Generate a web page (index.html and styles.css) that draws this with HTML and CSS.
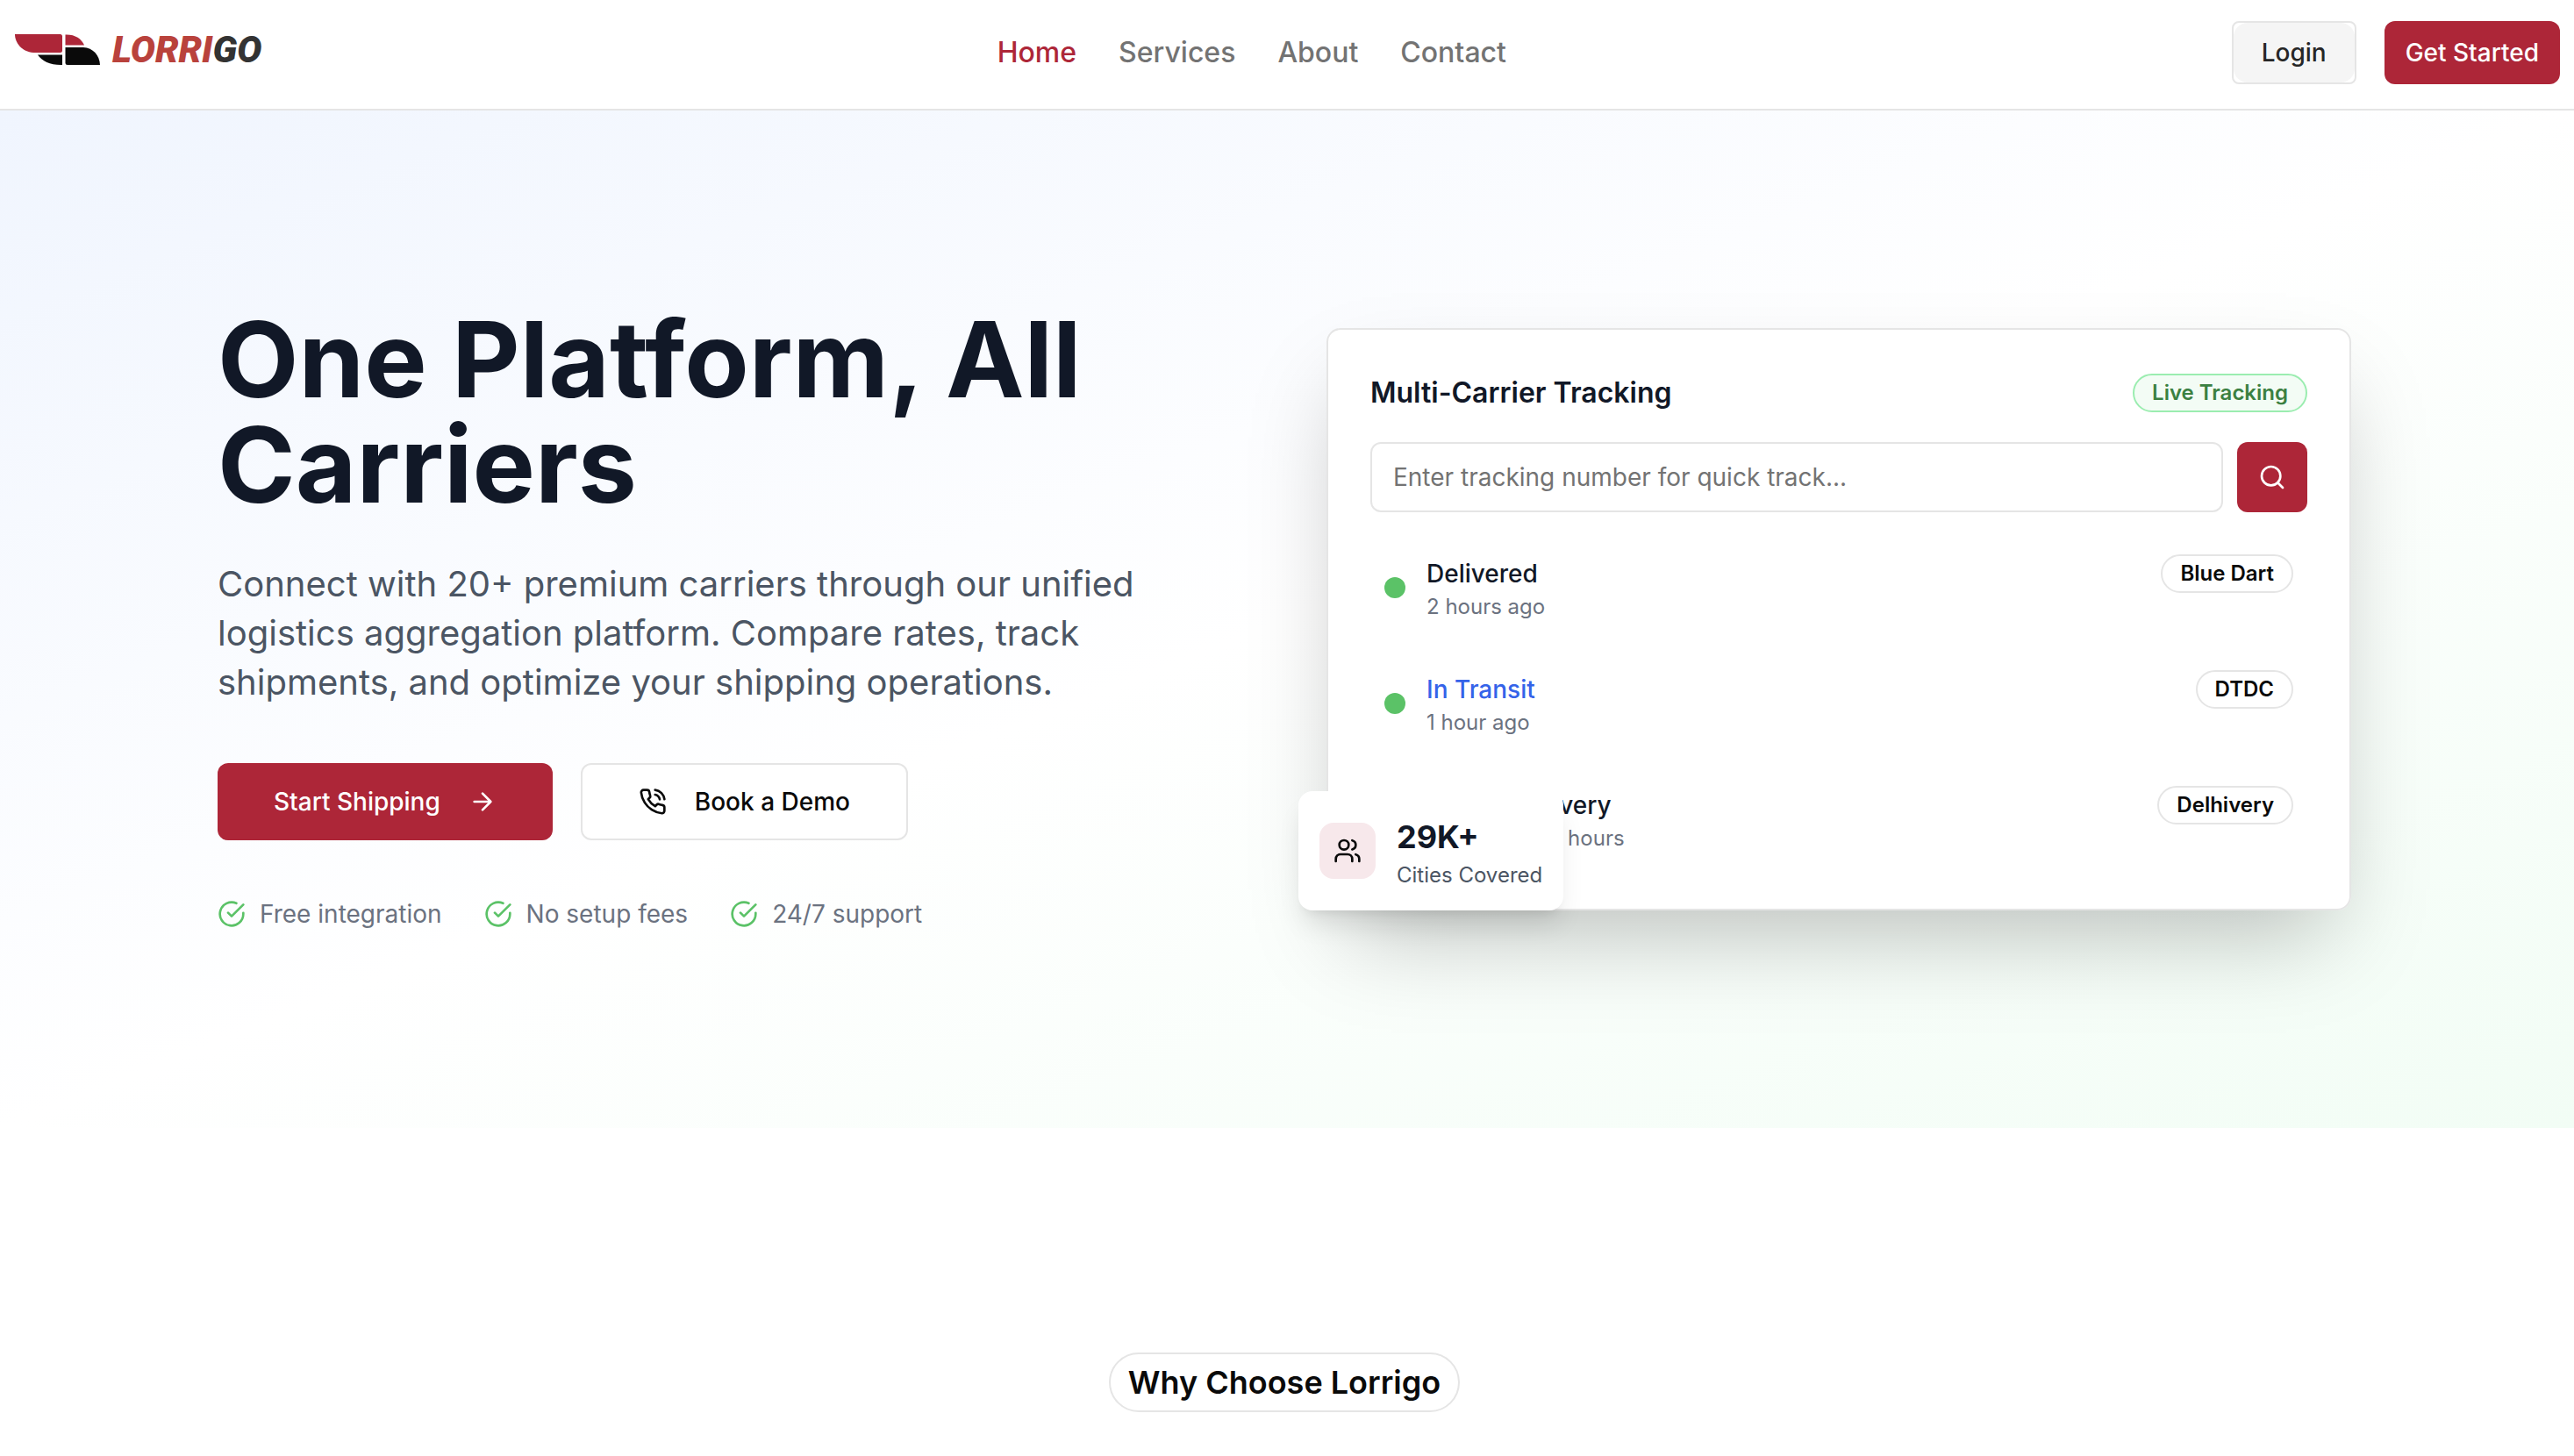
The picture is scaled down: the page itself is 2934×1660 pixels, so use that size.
FILE: index.html
```html
<!DOCTYPE html>
<html lang="en">
<head>
<meta charset="utf-8">
<meta name="viewport" content="width=device-width, initial-scale=1">
<title>Lorrigo</title>
<link rel="stylesheet" href="styles.css">
</head>
<body>
<header class="site-header">
  <a class="logo" href="#">
    <svg class="logo-mark" viewBox="-1 0 98 36" aria-hidden="true">
      <path fill="#ad2638" d="M0 0H51.500Q54 0 54 2.500V18.500Q54 21 51.500 21H21C8 20 0 10 0 0Z"/>
      <path fill="#ad2638" d="M57.500 0.500C68 0 76 5 79 12.500H57.500Z"/>
      <path fill="#0a0a0a" d="M26 23.500H54V35C41 35.500 31 31 26 23.500Z"/>
      <path fill="#0a0a0a" d="M57.500 15H78C89 15.500 96.500 24 97 35H60Q57.500 35 57.500 32.500Z"/>
    </svg>
    <span class="logo-text">LORRI<span class="logo-dark">GO</span></span>
  </a>
  <nav class="nav" aria-label="Main">
    <a class="nav-link nav-link-active" href="#">Home</a>
    <a class="nav-link" href="#">Services</a>
    <a class="nav-link" href="#">About</a>
    <a class="nav-link" href="#">Contact</a>
  </nav>
  <div class="account">
    <div class="login-frame"><button class="login" type="button">Login</button></div>
    <button class="btn btn-primary btn-compact" type="button">Get Started</button>
  </div>
</header>
<main>
  <section class="hero">
    <div class="hero-grid">
      <div class="pitch">
        <h1 class="title">One Platform, All Carriers</h1>
        <p class="lead">Connect with 20+ premium carriers through our unified logistics aggregation platform. Compare rates, track shipments, and optimize your shipping operations.</p>
        <div class="actions">
          <button class="btn btn-primary btn-large" type="button">Start Shipping
            <svg class="icon" viewBox="0 0 24 24" aria-hidden="true"><path d="M5 12h14M12 5l7 7-7 7"/></svg>
          </button>
          <button class="btn btn-outline btn-large" type="button">
            <svg class="icon" viewBox="0 0 24 24" aria-hidden="true"><path d="M22 16.920v3a2 2 0 0 1-2.180 2 19.790 19.790 0 0 1-8.630-3.070 19.500 19.500 0 0 1-6-6 19.790 19.790 0 0 1-3.070-8.670A2 2 0 0 1 4.110 2h3a2 2 0 0 1 2 1.720 12.840 12.840 0 0 0 .7 2.810 2 2 0 0 1-.45 2.110L8.090 9.910a16 16 0 0 0 6 6l1.270-1.270a2 2 0 0 1 2.110-.45 12.840 12.840 0 0 0 2.810.7A2 2 0 0 1 22 16.920z"/><path d="M14.050 2a9 9 0 0 1 8 7.940M14.050 6A5 5 0 0 1 18 10"/></svg>
            Book a Demo</button>
        </div>
        <ul class="perks">
          <li class="perk"><svg class="icon icon-green" viewBox="0 0 24 24" aria-hidden="true"><path d="M22 11.080V12a10 10 0 1 1-5.930-9.140M22 4 12 14.010l-3-3"/></svg>Free integration</li>
          <li class="perk"><svg class="icon icon-green" viewBox="0 0 24 24" aria-hidden="true"><path d="M22 11.080V12a10 10 0 1 1-5.930-9.140M22 4 12 14.010l-3-3"/></svg>No setup fees</li>
          <li class="perk"><svg class="icon icon-green" viewBox="0 0 24 24" aria-hidden="true"><path d="M22 11.080V12a10 10 0 1 1-5.930-9.140M22 4 12 14.010l-3-3"/></svg>24/7 support</li>
        </ul>
      </div>
      <div class="preview">
        <div class="card">
          <div class="card-head">
            <h2 class="card-title">Multi-Carrier Tracking</h2>
            <span class="badge badge-live">Live Tracking</span>
          </div>
          <form class="track-form">
            <input class="track-input" type="text" aria-label="Tracking number" placeholder="Enter tracking number for quick track...">
            <button class="btn btn-primary btn-square" type="button" aria-label="Search">
              <svg class="icon" viewBox="0 0 24 24" aria-hidden="true"><circle cx="11" cy="11" r="8"/><path d="m21 21-4.300-4.300"/></svg>
            </button>
          </form>
          <ul class="shipments">
            <li class="shipment">
              <span class="dot"></span>
              <div class="shipment-body">
                <div class="shipment-top"><span class="status">Delivered</span><span class="badge">Blue Dart</span></div>
                <p class="time">2 hours ago</p>
              </div>
            </li>
            <li class="shipment">
              <span class="dot"></span>
              <div class="shipment-body">
                <div class="shipment-top"><span class="status status-transit">In Transit</span><span class="badge">DTDC</span></div>
                <p class="time">1 hour ago</p>
              </div>
            </li>
            <li class="shipment">
              <span class="dot"></span>
              <div class="shipment-body">
                <div class="shipment-top"><span class="status">Out for Delivery</span><span class="badge">Delhivery</span></div>
                <p class="time">Expected in 2 hours</p>
              </div>
            </li>
          </ul>
        </div>
        <div class="stat">
          <div class="stat-icon"><svg class="icon" viewBox="0 0 24 24" aria-hidden="true"><path d="M16 21v-2a4 4 0 0 0-4-4H6a4 4 0 0 0-4 4v2"/><circle cx="9" cy="7" r="4"/><path d="M22 21v-2a4 4 0 0 0-3-3.870M16 3.130a4 4 0 0 1 0 7.750"/></svg></div>
          <div>
            <p class="stat-value">29K+</p>
            <p class="stat-label">Cities Covered</p>
          </div>
        </div>
      </div>
    </div>
  </section>
  <section class="why">
    <h2 class="why-badge">Why Choose Lorrigo</h2>
  </section>
</main>
</body>
</html>
```
FILE: styles.css
```css
:root {
  --brand: #ad2638;
  --line: #e5e5e5;
  --ink: #111827;
  --muted: #6b7280;
}

* {
  box-sizing: border-box;
  margin: 0;
  padding: 0;
}

body {
  font-family: Inter, "Liberation Sans", sans-serif;
  font-size: 28px;
  line-height: 40px;
  color: #0a0a0a;
  background: #fff;
}

button,
input {
  font: inherit;
}

ul {
  list-style: none;
}

.site-header {
  display: flex;
  align-items: center;
  justify-content: space-between;
  padding: 24px 16px 28px;
  border-bottom: 2px solid var(--line);
  background: #fff;
}

.logo {
  display: flex;
  align-items: center;
  gap: 14px;
  width: 294px;
  padding-bottom: 6px;
  text-decoration: none;
}

.logo-mark {
  width: 98px;
  height: 36px;
}

.logo-text {
  font-family: Roboto, "Liberation Sans", sans-serif;
  font-size: 42px;
  font-style: italic;
  font-weight: 900;
  line-height: 48px;
  color: #b9423c;
}

.logo-dark {
  color: #333;
}

.nav {
  display: flex;
  gap: 48px;
}

.nav-link {
  font-size: 32px;
  font-weight: 500;
  color: #737373;
  text-decoration: none;
}

.nav-link-active {
  color: var(--brand);
}

.account {
  display: flex;
  gap: 32px;
}

.login-frame {
  border: 2px solid var(--line);
  border-radius: 8px;
}

.login {
  height: 68px;
  padding: 0 32px;
  border: 0;
  border-radius: 16px;
  font-weight: 500;
  color: #262626;
  background: #f5f5f5;
}

.btn {
  display: inline-flex;
  align-items: center;
  justify-content: center;
  gap: 32px;
  border: 0;
  border-radius: 12px;
  font-weight: 500;
}

.btn-primary {
  color: #fff;
  background: var(--brand);
}

.btn-outline {
  border: 2px solid var(--line);
  color: #0a0a0a;
  background: #fff;
}

.btn-compact {
  height: 72px;
  padding: 0 24px;
}

.btn-large {
  height: 88px;
  padding: 0 64px;
}

.btn-square {
  width: 80px;
  height: 80px;
}

.icon {
  flex: none;
  width: 32px;
  height: 32px;
  fill: none;
  stroke: currentColor;
  stroke-width: 2;
  stroke-linecap: round;
  stroke-linejoin: round;
}

.icon-green {
  color: #5bc267;
}

.hero {
  padding: 224px 70px 224px 64px;
  background: linear-gradient(to bottom right, #f0f5fe, #fff, #f2fdf5);
}

.hero-grid {
  display: grid;
  grid-template-columns: 1fr 1fr;
  gap: 96px;
  align-items: center;
  max-width: 2432px;
  margin: 0 auto;
}

.title {
  margin-bottom: 48px;
  font-size: 120px;
  font-weight: 700;
  line-height: 120px;
  color: var(--ink);
}

.lead {
  margin-bottom: 64px;
  font-size: 40px;
  line-height: 56px;
  color: #4b5563;
}

.actions {
  display: flex;
  gap: 32px;
  margin-bottom: 64px;
}

.perks {
  display: flex;
  gap: 48px;
  color: var(--muted);
}

.perk {
  display: flex;
  align-items: center;
  gap: 16px;
}

.preview {
  position: relative;
}

.card {
  padding: 48px;
  border: 2px solid var(--line);
  border-radius: 16px;
  background: rgb(255 255 255 / 95%);
  box-shadow: 0 50px 100px -24px rgb(0 0 0 / 25%);
}

.card-head {
  display: flex;
  align-items: center;
  justify-content: space-between;
  margin-bottom: 32px;
}

.card-title {
  font-size: 32px;
  font-weight: 600;
  line-height: 48px;
  color: var(--ink);
}

.badge {
  padding: 4px 20px;
  border: 2px solid var(--line);
  border-radius: 22px;
  font-size: 24px;
  font-weight: 600;
  line-height: 32px;
}

.badge-live {
  border-color: #9bedb0;
  color: #3b8041;
  background: #f3fcf5;
}

.track-form {
  display: flex;
  gap: 16px;
  margin-bottom: 32px;
}

.track-input {
  flex: 1;
  height: 80px;
  padding: 0 24px;
  border: 2px solid var(--line);
  border-radius: 12px;
  background: #fff;
}

.track-input::placeholder {
  color: #737373;
}

.shipments {
  display: grid;
  gap: 24px;
}

.shipment {
  display: flex;
  align-items: center;
  gap: 24px;
  padding: 16px;
}

.dot {
  width: 24px;
  height: 24px;
  border-radius: 50%;
  background: #5bc267;
}

.shipment-body {
  flex: 1;
}

.shipment-top {
  display: flex;
  align-items: center;
  justify-content: space-between;
}

.status {
  font-weight: 500;
  color: var(--ink);
}

.status-transit {
  color: #3563e9;
}

.time {
  font-size: 24px;
  line-height: 32px;
  color: var(--muted);
}

.stat {
  position: absolute;
  bottom: 0;
  left: -32px;
  display: flex;
  align-items: center;
  gap: 24px;
  padding: 24px;
  border-radius: 16px;
  background: #fff;
  box-shadow: 0 20px 30px -6px rgb(0 0 0 / 10%), 0 8px 12px -8px rgb(0 0 0 / 10%);
}

.stat-icon {
  display: grid;
  place-items: center;
  width: 64px;
  height: 64px;
  border-radius: 16px;
  background: #f7e8eb;
}

.stat-value {
  font-size: 36px;
  font-weight: 700;
  line-height: 56px;
  color: var(--ink);
}

.stat-label {
  font-size: 24px;
  line-height: 32px;
  color: #4b5563;
}

.why {
  display: flex;
  justify-content: center;
  padding: 256px 70px 50px 64px;
}

.why-badge {
  padding: 4px 20px;
  border: 2px solid var(--line);
  border-radius: 34px;
  font-size: 36px;
  font-weight: 600;
  line-height: 56px;
}
```
